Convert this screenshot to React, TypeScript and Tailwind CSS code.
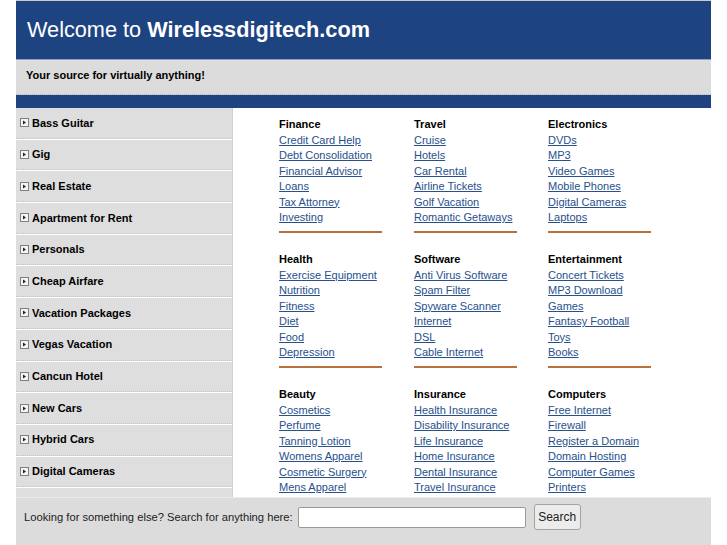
import React from 'react';

const sidebar = [
  'Bass Guitar',
  'Gig',
  'Real Estate',
  'Apartment for Rent',
  'Personals',
  'Cheap Airfare',
  'Vacation Packages',
  'Vegas Vacation',
  'Cancun Hotel',
  'New Cars',
  'Hybrid Cars',
  'Digital Cameras',
];

const groups = [
  { title: 'Finance', links: ['Credit Card Help', 'Debt Consolidation', 'Financial Advisor', 'Loans', 'Tax Attorney', 'Investing'] },
  { title: 'Travel', links: ['Cruise', 'Hotels', 'Car Rental', 'Airline Tickets', 'Golf Vacation', 'Romantic Getaways'] },
  { title: 'Electronics', links: ['DVDs', 'MP3', 'Video Games', 'Mobile Phones', 'Digital Cameras', 'Laptops'] },
  { title: 'Health', links: ['Exercise Equipment', 'Nutrition', 'Fitness', 'Diet', 'Food', 'Depression'] },
  { title: 'Software', links: ['Anti Virus Software', 'Spam Filter', 'Spyware Scanner', 'Internet', 'DSL', 'Cable Internet'] },
  { title: 'Entertainment', links: ['Concert Tickets', 'MP3 Download', 'Games', 'Fantasy Football', 'Toys', 'Books'] },
  { title: 'Beauty', links: ['Cosmetics', 'Perfume', 'Tanning Lotion', 'Womens Apparel', 'Cosmetic Surgery', 'Mens Apparel'] },
  { title: 'Insurance', links: ['Health Insurance', 'Disability Insurance', 'Life Insurance', 'Home Insurance', 'Dental Insurance', 'Travel Insurance'] },
  { title: 'Computers', links: ['Free Internet', 'Firewall', 'Register a Domain', 'Domain Hosting', 'Computer Games', 'Printers'] },
];

function BoxIcon() {
  return (
    <svg width="9" height="9" viewBox="0 0 9 9" className="shrink-0">
      <rect x="0.5" y="0.5" width="8" height="8" fill="#f4f4f4" stroke="#808080" />
      <path d="M3 2.5 L6 4.5 L3 6.5 Z" fill="#222" />
    </svg>
  );
}

export default function App() {
  return (
    <div className="min-h-screen bg-white font-['Liberation_Sans',Arial,sans-serif]">
      <div className="mx-auto w-[695px]">
        {/* header */}
        <div className="h-[60px] bg-[#1e4381] border-t border-[#c9c9c9] border-b border-b-[#8ea0bf] flex items-center pl-[11px] text-[21.7px] text-white">
          <span>Welcome to&nbsp;</span>
          <span className="font-bold">Wirelessdigitech.com</span>
        </div>

        <div className="h-[35px] bg-[#dcdcdc] border-b border-dotted border-[#b8b8b8] flex items-center pl-[10px] pb-[3px] text-[11px] font-bold text-black">
          Your source for virtually anything!
        </div>

        <div className="h-[13px] bg-[#1e4381]" />

        {/* main */}
        <div className="flex h-[389px] overflow-hidden">
          <div className="w-[217px] bg-[#dedede] border-r border-[#cfcfcf] shrink-0">
            {sidebar.map((s) => (
              <div key={s} className="h-[31.7px] border-b border-white">
                <div className="h-full border-b border-dotted border-[#c4c4c4] flex items-center gap-[3px] pl-[4px] text-[11px] font-bold text-black">
                  <BoxIcon />
                  <span>{s}</span>
                </div>
              </div>
            ))}
          </div>

          <div className="flex-1 bg-white pl-[46px] pt-[9px]">
            <div className="grid grid-cols-[135px_134px_135px]">
              {groups.map((g) => (
                <div key={g.title} className="mb-[19.5px] text-[11px] leading-[15.5px]">
                  <div className="font-bold text-black">{g.title}</div>
                  {g.links.map((l) => (
                    <div key={l}>
                      <a href="#" className="text-[#27508d] underline">{l}</a>
                    </div>
                  ))}
                  <div className="mt-[5px] h-[2px] w-[103px] bg-[#b8713a]" />
                </div>
              ))}
            </div>
          </div>
        </div>

        {/* search */}
        <div className="h-[60px] bg-[#dcdcdc] border-t border-[#ececec] flex items-start pt-[6px] pl-[8px] text-[11.2px] text-[#222]">
          <div className="flex items-center h-[26px]">
            <span>Looking for something else? Search for anything here:</span>
            <input
              type="text"
              className="ml-[5px] w-[228px] h-[21px] bg-white border border-[#9a9a9a] rounded-[2px] outline-none"
            />
            <button className="ml-[8px] w-[47px] h-[26px] bg-[#ececec] border border-[#a3a3a3] rounded-[3px] text-[12px] text-[#222]">
              Search
            </button>
          </div>
        </div>
      </div>
    </div>
  );
}
